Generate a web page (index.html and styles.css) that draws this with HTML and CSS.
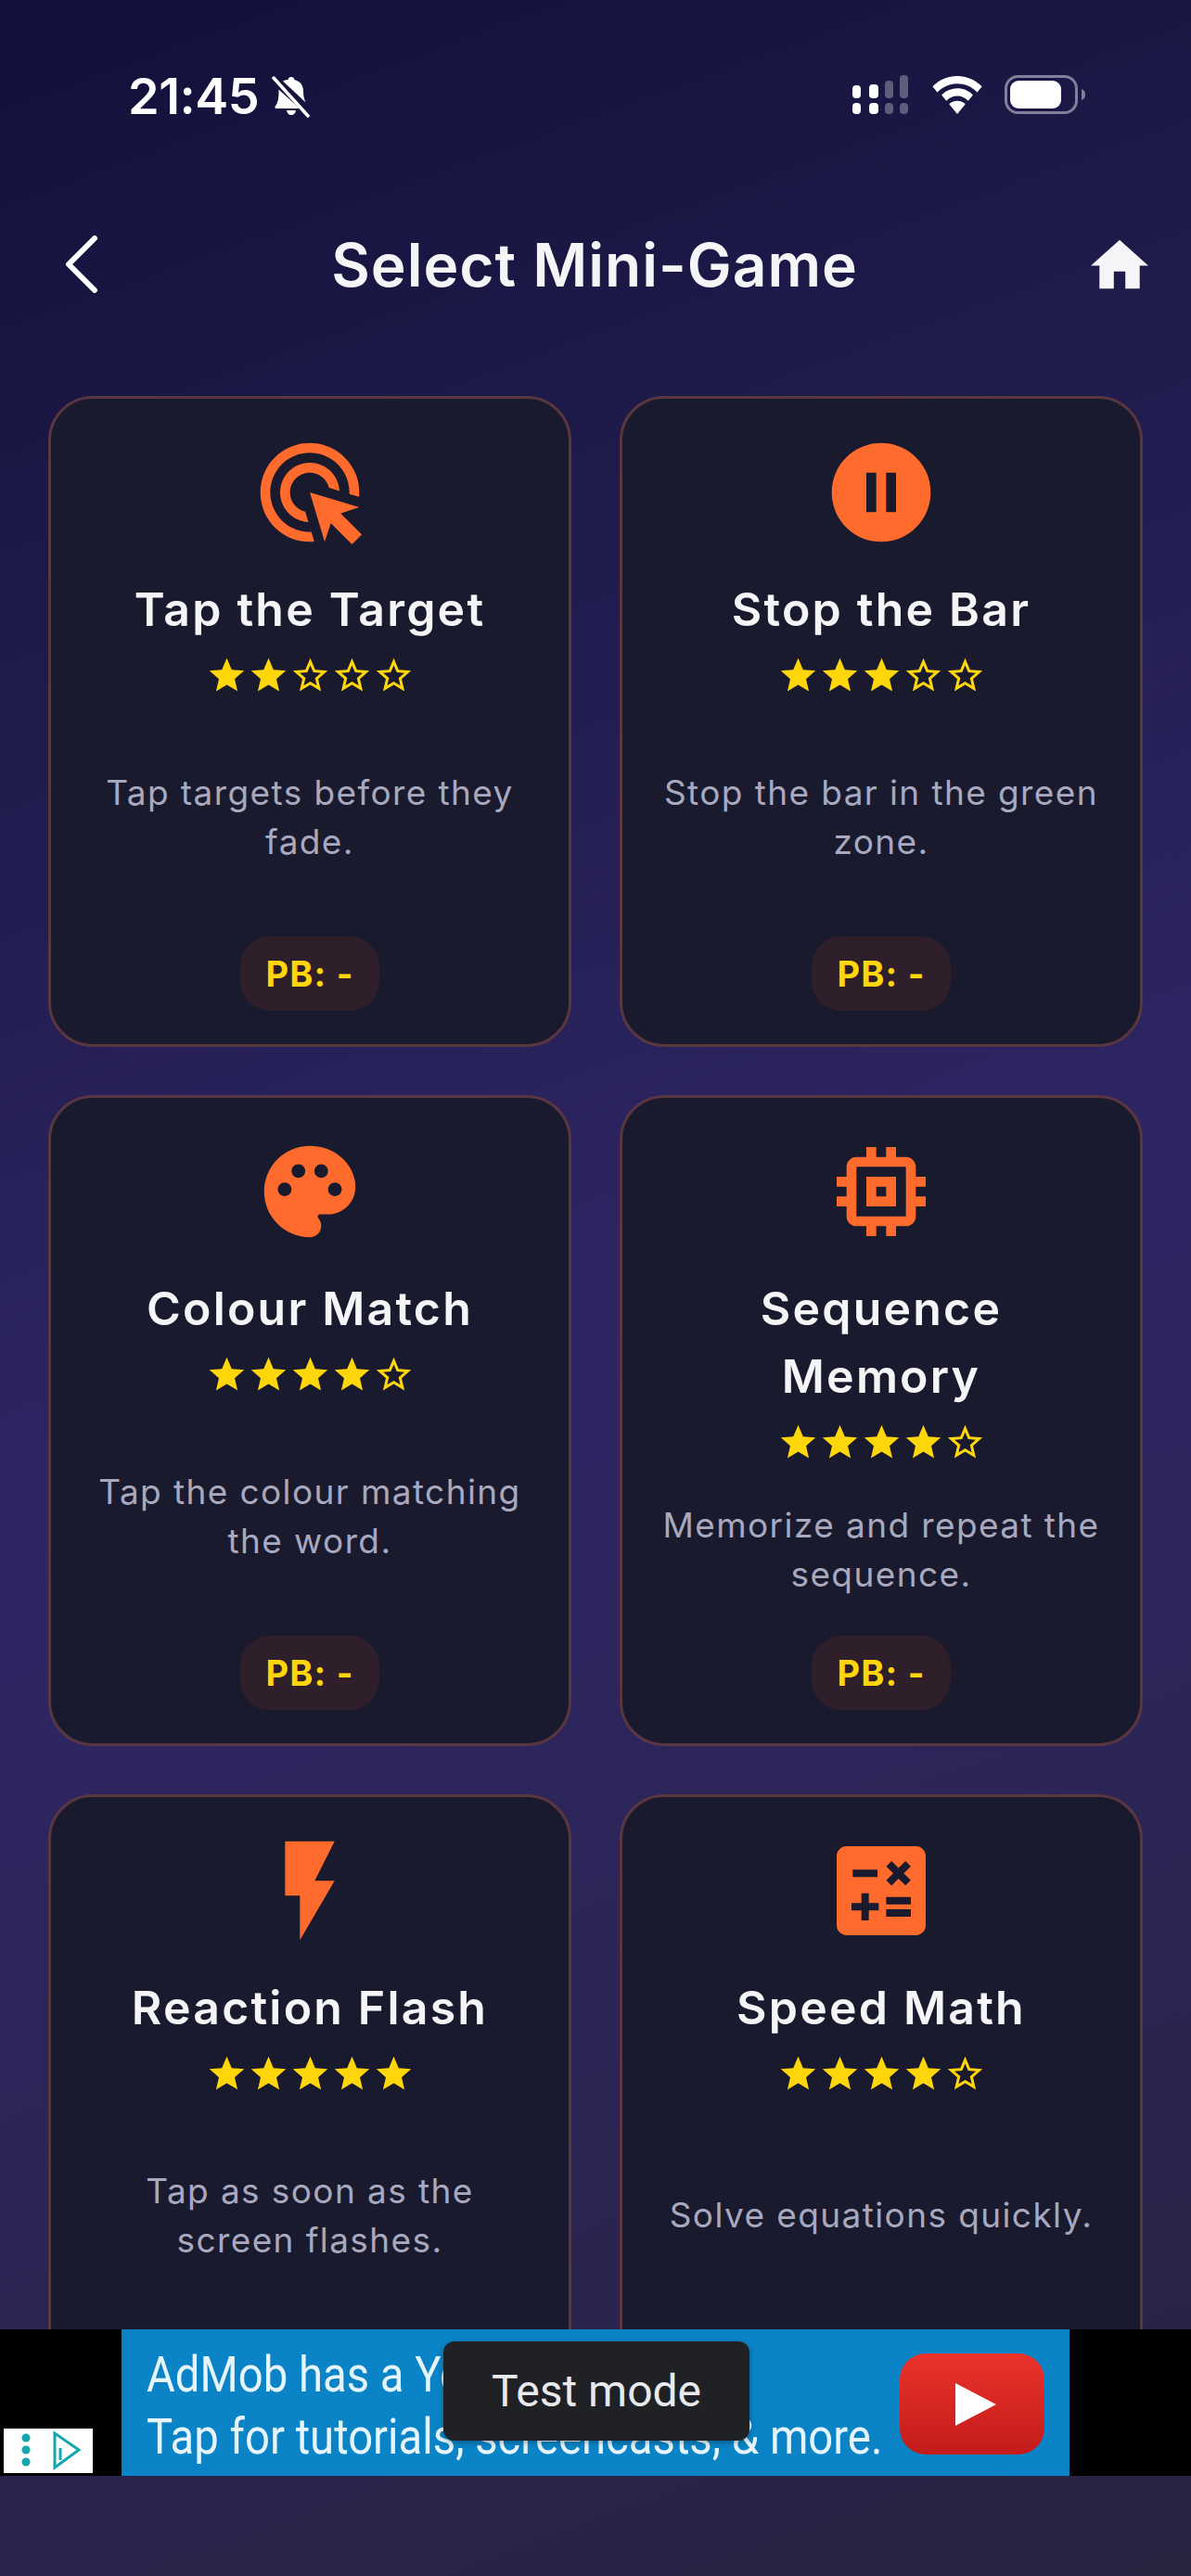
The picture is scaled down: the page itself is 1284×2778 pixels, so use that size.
FILE: index.html
```html
<!DOCTYPE html>
<html lang="en">
<head>
<meta charset="utf-8">
<title>Select Mini-Game</title>
<link rel="stylesheet" href="styles.css">
</head>
<body>
<svg class="defs" width="0" height="0" aria-hidden="true">
  <symbol id="s-full" viewBox="0 0 24 24"><path d="M12 17.27L18.18 21l-1.64-7.03L22 9.24l-7.19-.61L12 2 9.19 8.63 2 9.24l5.46 4.73L5.82 21z"/></symbol>
  <symbol id="s-empty" viewBox="0 0 24 24"><path d="M22 9.24l-7.19-.62L12 2 9.19 8.63 2 9.24l5.46 4.73L5.82 21 12 17.27 18.18 21l-1.63-7.03L22 9.24zM12 15.4l-3.76 2.27 1-4.28-3.32-2.88 4.38-.38L12 6.1l1.71 4.04 4.38.38-3.32 2.88 1 4.28L12 15.4z"/></symbol>
</svg>
<div class="screen">
  <div class="viewport">
    <div class="statusbar">
      <div class="status-left">
        <span class="time">21:45</span>
        <svg class="bell" viewBox="0 0 44 46"><path fill="#fff" d="M22 2c2 0 3.2 1.3 3.4 3 6 1.400 9.600 6 9.600 12.500 0 5 1 9 2.600 12L13 6.600C14.800 5.500 16.500 4.600 18.600 5 18.800 3.300 20 2 22 2zM8.500 15.500L31 36H6c-1.500 0-2.200-1.500-1.200-2.600C7.500 30.500 8.500 25 8.500 18.500zM17 38h10c-.4 3-2.400 5-5 5s-4.600-2-5-5z"/><path stroke="#fff" stroke-width="3.500" stroke-linecap="round" d="M3 3l37 41"/></svg>
      </div>
      <div class="status-right">
        <svg class="signal" viewBox="0 0 62 44">
          <g fill="#fff"><rect x="1" y="12" width="9" height="14" rx="4"/><rect x="1" y="31" width="9" height="12" rx="4"/><rect x="19" y="11" width="10" height="15" rx="4"/><rect x="19" y="31" width="10" height="12" rx="4"/></g>
          <g fill="#fff" fill-opacity=".3"><rect x="36" y="7" width="9" height="19" rx="4"/><rect x="36" y="31" width="9" height="12" rx="4"/><rect x="52" y="1" width="9" height="25" rx="4"/><rect x="52" y="31" width="9" height="12" rx="4"/></g>
        </svg>
        <svg class="wifi" viewBox="0 0 52 40"><g fill="#fff"><path d="M26 0C16 0 7 4 0 11l5 6c6-6 13-9 21-9s15 3 21 9l5-6C45 4 36 0 26 0z"/><path d="M26 13c-6.500 0-12 2.500-16.500 7l5 6c3-3 7-5 11.500-5s8.500 2 11.500 5l5-6C38 15.500 32.500 13 26 13z"/><path d="M26 26c-3.500 0-6.500 1.300-8.500 3.500L26 40l8.500-10.500C32.500 27.300 29.500 26 26 26z"/></g></svg>
        <svg class="battery" viewBox="0 0 88 42"><rect x="1.500" y="1.500" width="76" height="39" rx="13" fill="none" stroke="#fff" stroke-opacity=".45" stroke-width="3"/><rect x="6" y="6" width="55" height="30" rx="9" fill="#fff"/><path d="M83 15c3 1 4 3 4 6s-1 5-4 6z" fill="#fff" fill-opacity=".45"/></svg>
      </div>
    </div>

    <header class="topbar">
      <svg class="back" viewBox="0 0 36 62"><path d="M32 3L4 31l28 28" fill="none" stroke="#fff" stroke-width="6" stroke-linecap="round" stroke-linejoin="round"/></svg>
      <h1 class="page-title">Select Mini-Game</h1>
      <svg class="home" viewBox="2 3 20 17"><path d="M10 20v-6h4v6h5v-8h3L12 3 2 12h3v8z"/></svg>
    </header>

    <main class="grid">
      <article class="card">
        <svg class="game-icon" viewBox="0 0 24 24"><path d="M11.710 17.990C8.530 17.840 6 15.220 6 12c0-3.310 2.690-6 6-6 3.220 0 5.840 2.530 5.990 5.710l-2.100-.63C15.480 9.310 13.890 8 12 8c-2.210 0-4 1.790-4 4 0 1.890 1.310 3.480 3.080 3.890l.63 2.100zM22 12c0 .3-.01.6-.04.9l-1.970-.59c.01-.1.01-.21.01-.31 0-4.420-3.580-8-8-8s-8 3.580-8 8 3.580 8 8 8c.1 0 .21 0 .31-.01l.59 1.970c-.3.03-.6.04-.9.04-5.520 0-10-4.480-10-10S6.480 2 12 2s10 4.480 10 10zm-3.770 4.260L22 15l-10-3 3 10 1.260-3.770 4.270 4.270 1.980-1.980-4.280-4.260z"/></svg>
        <h2 class="game-title">Tap the Target</h2>
        <div class="stars"><svg class="star"><use href="#s-full"/></svg><svg class="star"><use href="#s-full"/></svg><svg class="star"><use href="#s-empty"/></svg><svg class="star"><use href="#s-empty"/></svg><svg class="star"><use href="#s-empty"/></svg></div>
        <p class="desc">Tap targets before they fade.</p>
        <span class="pb">PB: -</span>
      </article>
      <article class="card">
        <svg class="game-icon" viewBox="0 0 24 24"><path d="M12 2C6.480 2 2 6.480 2 12s4.480 10 10 10 10-4.480 10-10S17.520 2 12 2zm-1 14H9V8h2v8zm4 0h-2V8h2v8z"/></svg>
        <h2 class="game-title">Stop the Bar</h2>
        <div class="stars"><svg class="star"><use href="#s-full"/></svg><svg class="star"><use href="#s-full"/></svg><svg class="star"><use href="#s-full"/></svg><svg class="star"><use href="#s-empty"/></svg><svg class="star"><use href="#s-empty"/></svg></div>
        <p class="desc">Stop the bar in the green zone.</p>
        <span class="pb">PB: -</span>
      </article>
      <article class="card">
        <svg class="game-icon" viewBox="-1 -1 26 26"><path d="M12 2C6.490 2 2 6.490 2 12s4.490 10 10 10c1.380 0 2.500-1.120 2.500-2.500 0-.61-.23-1.200-.64-1.670-.08-.1-.13-.21-.13-.33 0-.28.22-.5.5-.5H16c3.310 0 6-2.690 6-6 0-4.960-4.490-9-10-9zm5.500 11c-.83 0-1.500-.67-1.500-1.500s.67-1.500 1.500-1.500 1.500.67 1.500 1.500-.67 1.500-1.500 1.500zm-3-4c-.83 0-1.500-.67-1.500-1.500S13.670 6 14.500 6s1.500.67 1.500 1.500S15.330 9 14.500 9zM5 11.500c0-.83.67-1.500 1.500-1.500s1.500.67 1.500 1.500S7.330 13 6.500 13 5 12.330 5 11.500zm6-4c0 .83-.67 1.500-1.500 1.500S8 8.330 8 7.500 8.670 6 9.500 6s1.500.67 1.500 1.500z"/></svg>
        <h2 class="game-title">Colour Match</h2>
        <div class="stars"><svg class="star"><use href="#s-full"/></svg><svg class="star"><use href="#s-full"/></svg><svg class="star"><use href="#s-full"/></svg><svg class="star"><use href="#s-full"/></svg><svg class="star"><use href="#s-empty"/></svg></div>
        <p class="desc">Tap the colour matching the word.</p>
        <span class="pb">PB: -</span>
      </article>
      <article class="card">
        <svg class="game-icon" viewBox="0 0 24 24"><path d="M15 9H9v6h6V9zm-2 4h-2v-2h2v2zm8-2V9h-2V7c0-1.100-.9-2-2-2h-2V3h-2v2h-2V3H9v2H7c-1.100 0-2 .9-2 2v2H3v2h2v2H3v2h2v2c0 1.100.9 2 2 2h2v2h2v-2h2v2h2v-2h2c1.100 0 2-.9 2-2v-2h2v-2h-2v-2h2zm-4 6H7V7h10v10z"/></svg>
        <h2 class="game-title">Sequence Memory</h2>
        <div class="stars"><svg class="star"><use href="#s-full"/></svg><svg class="star"><use href="#s-full"/></svg><svg class="star"><use href="#s-full"/></svg><svg class="star"><use href="#s-full"/></svg><svg class="star"><use href="#s-empty"/></svg></div>
        <p class="desc">Memorize and repeat the sequence.</p>
        <span class="pb">PB: -</span>
      </article>
      <article class="card">
        <svg class="game-icon" viewBox="0 0 24 24"><path d="M7 2v11h3v9l7-12h-4l4-8z"/></svg>
        <h2 class="game-title">Reaction Flash</h2>
        <div class="stars"><svg class="star"><use href="#s-full"/></svg><svg class="star"><use href="#s-full"/></svg><svg class="star"><use href="#s-full"/></svg><svg class="star"><use href="#s-full"/></svg><svg class="star"><use href="#s-full"/></svg></div>
        <p class="desc">Tap as soon as the screen flashes.</p>
        <span class="pb">PB: -</span>
      </article>
      <article class="card">
        <svg class="game-icon" viewBox="0 0 24 24"><path d="M19 3H5c-1.100 0-2 .9-2 2v14c0 1.100.9 2 2 2h14c1.100 0 2-.9 2-2V5c0-1.100-.9-2-2-2zm-5.970 4.060L14.090 6l1.410 1.410L16.910 6l1.060 1.060-1.410 1.410 1.410 1.410-1.060 1.060-1.410-1.400-1.410 1.410-1.060-1.060 1.410-1.410-1.410-1.420zm-6.780.66h5v1.500h-5v-1.500zM11.500 16h-2v2H8v-2H6v-1.500h2v-2h1.500v2h2V16zm6.500 1.250h-5v-1.500h5v1.500zm0-2.500h-5v-1.500h5v1.500z"/></svg>
        <h2 class="game-title">Speed Math</h2>
        <div class="stars"><svg class="star"><use href="#s-full"/></svg><svg class="star"><use href="#s-full"/></svg><svg class="star"><use href="#s-full"/></svg><svg class="star"><use href="#s-full"/></svg><svg class="star"><use href="#s-empty"/></svg></div>
        <p class="desc">Solve equations quickly.</p>
        <span class="pb">PB: -</span>
      </article>
    </main>
  </div>

  <aside class="adbar">
    <div class="ad">
      <div class="ad-copy">
        <div>AdMob has a YouTube channel</div>
        <div>Tap for tutorials, screencasts, &amp; more.</div>
      </div>
      <div class="yt"><svg class="yt-play" viewBox="0 0 44 46"><path d="M0 0l44 23L0 46z"/></svg></div>
    </div>
    <div class="adchoice">
      <svg class="adchoice-svg" viewBox="0 0 96 48"><g fill="#14a7ae"><circle cx="24" cy="10" r="4.500"/><circle cx="24" cy="23" r="4.500"/><circle cx="24" cy="36" r="4.500"/></g><path d="M55 5v37l26-19z" fill="none" stroke="#14a7ae" stroke-width="3"/><path d="M61 21v13" stroke="#14a7ae" stroke-width="3"/></svg>
    </div>
    <div class="toast">Test mode</div>
  </aside>
  <div class="footer-space"></div>
</div>
</body>
</html>
```
FILE: styles.css
```css
* { box-sizing: border-box; }
html, body { margin: 0; padding: 0; }
body { width: 1284px; height: 2778px; overflow: hidden; font-family: "Inter", "Liberation Sans", sans-serif; color: #f5f5f7; }
.defs { display: block; height: 0; }
.screen {
  width: 1284px; height: 2778px; display: flex; flex-direction: column;
  background: linear-gradient(160deg, #12103a 0%, #1e1a4a 22%, #2e2664 52%, #2b2555 75%, #27233f 100%);
}
.viewport { height: 2512px; overflow: hidden; flex: none; }

.statusbar { height: 225px; display: flex; justify-content: space-between; align-items: flex-start; padding: 80px 113px 0 138px; }
.status-left { display: flex; align-items: center; gap: 13px; height: 48px; }
.time { font-size: 54px; font-weight: 600; color: #fff; line-height: 48px; letter-spacing: -.5px; }
.bell { width: 44px; height: 46px; }
.status-right { display: flex; align-items: center; height: 44px; }
.signal { width: 62px; height: 44px; margin-right: 25px; }
.wifi { width: 54px; height: 41px; margin-right: 24px; }
.battery { width: 88px; height: 42px; }

.topbar { height: 120px; display: flex; align-items: center; justify-content: space-between; padding: 0 46px 0 70px; }
.back { width: 36px; height: 62px; }
.page-title { margin: 0; font-size: 64px; font-weight: 600; letter-spacing: 1px; color: #f5f5f7; }
.home { width: 62px; height: 56px; fill: #f5f5f7; }

.grid { display: grid; grid-template-columns: 564px 564px; gap: 52px; padding: 82px 52px 0; }
.card {
  height: 702px; display: flex; flex-direction: column; align-items: center;
  padding: 37px 36px 36px; background: #1a1a2e; border: 3px solid #5a3640; border-radius: 48px;
}
.game-icon { width: 128px; height: 128px; fill: #ff6b2c; flex: none; }
.game-title { margin: 26px 0 12px; max-width: 430px; text-align: center; font-size: 50px; line-height: 73px; font-weight: 600; letter-spacing: 2.2px; color: #f5f5f7; }
.stars { display: flex; flex: none; }
.star { width: 45px; height: 45px; fill: #ffd60a; }
.desc { margin: 0; flex: 1; max-width: 475px; display: flex; align-items: center; text-align: center; justify-content: center; font-size: 37px; line-height: 53px; letter-spacing: 1.4px; color: #a8a8be; }
.pb { flex: none; width: 150px; height: 80px; display: flex; align-items: center; justify-content: center; border-radius: 32px; background: #2e1f2a; color: #ffd60a; font-size: 38px; font-weight: 700; letter-spacing: 1.2px; }

.adbar { position: relative; flex: none; height: 158px; background: #000; display: flex; justify-content: center; }
.ad { width: 1022px; height: 158px; background: #0a84c6; display: flex; align-items: center; justify-content: space-between; padding: 0 27px 0 27px; }
.ad-copy { flex: none; width: 790px; padding-top: 5px; font-family: "Roboto", sans-serif; font-size: 54px; line-height: 67px; color: #e6f4fb; white-space: nowrap; transform: scaleX(.875); transform-origin: left center; }
.yt { width: 156px; height: 109px; margin-top: 3px; border-radius: 28px; background: linear-gradient(#ea322a, #c31b1b); display: flex; align-items: center; justify-content: center; flex: none; }
.yt-play { width: 44px; height: 46px; fill: #fff; margin-left: 8px; }
.adchoice { position: absolute; left: 4px; top: 107px; width: 96px; height: 48px; background: #fff; }
.adchoice-svg { display: block; width: 96px; height: 48px; }
.toast { position: absolute; left: 478px; top: 13px; width: 330px; height: 107px; display: flex; align-items: center; justify-content: center; border-radius: 12px; background: #202124; color: #e8eaed; font-family: "Roboto", sans-serif; font-size: 48px; box-shadow: 0 2px 6px rgba(0,0,0,.3); }
.footer-space { flex: 1; }
```
